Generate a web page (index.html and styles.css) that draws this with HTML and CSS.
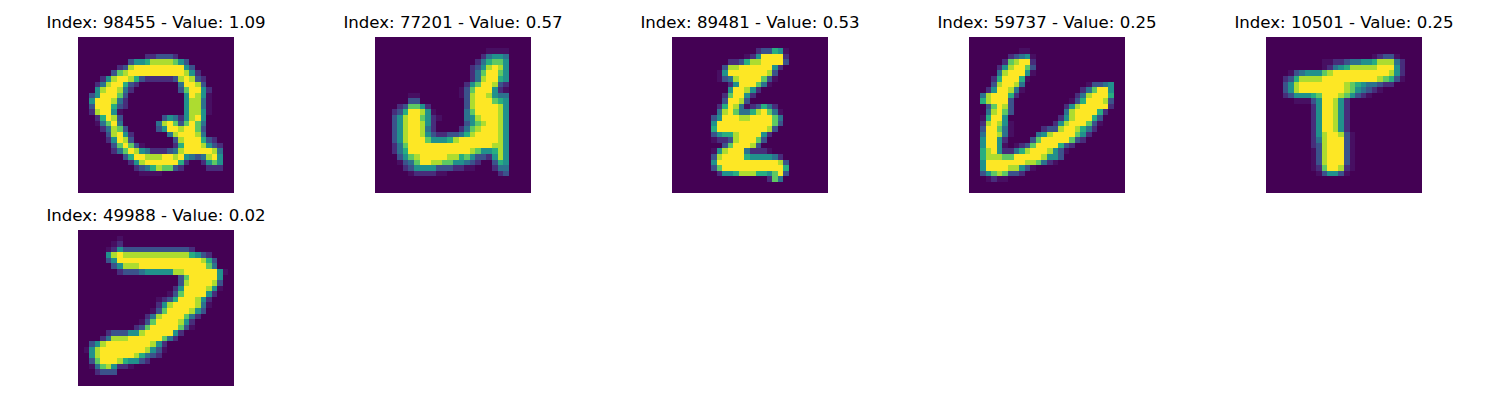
FILE: index.html
```html
<!DOCTYPE html>
<html lang="en">
<head>
<meta charset="utf-8">
<title>Top losses</title>
<link rel="stylesheet" href="styles.css">
</head>
<body>
<main class="figure">
  <figure class="panel"><figcaption class="panel-title">Index: 98455 - Value: 1.09</figcaption><canvas class="digit" data-glyph="q" width="28" height="28"></canvas></figure>
  <figure class="panel"><figcaption class="panel-title">Index: 77201 - Value: 0.57</figcaption><canvas class="digit" data-glyph="j" width="28" height="28"></canvas></figure>
  <figure class="panel"><figcaption class="panel-title">Index: 89481 - Value: 0.53</figcaption><canvas class="digit" data-glyph="e" width="28" height="28"></canvas></figure>
  <figure class="panel"><figcaption class="panel-title">Index: 59737 - Value: 0.25</figcaption><canvas class="digit" data-glyph="v" width="28" height="28"></canvas></figure>
  <figure class="panel"><figcaption class="panel-title">Index: 10501 - Value: 0.25</figcaption><canvas class="digit" data-glyph="t" width="28" height="28"></canvas></figure>
  <figure class="panel"><figcaption class="panel-title">Index: 49988 - Value: 0.02</figcaption><canvas class="digit" data-glyph="seven" width="28" height="28"></canvas></figure>
</main>
<script src="script.js"></script>
</body>
</html>
```
FILE: styles.css
```css
html, body {
  margin: 0;
  padding: 0;
  background: #ffffff;
}

.figure {
  display: grid;
  grid-template-columns: repeat(5, 156px);
  column-gap: 141px;
  row-gap: 13px;
  padding: 13px 0 0 78px;
}

.panel {
  margin: 0;
  display: flex;
  flex-direction: column;
  align-items: center;
  gap: 4px;
}

.panel-title {
  font-family: "DejaVu Sans", sans-serif;
  font-size: 16.6px;
  line-height: 20px;
  color: #000000;
  white-space: nowrap;
}

.digit {
  display: block;
  width: 156px;
  height: 156px;
  image-rendering: pixelated;
}
```
FILE: script.js
```js
var PALETTE = ["#440154", "#470f62", "#472d7b", "#3b528b", "#2c728e", "#21918c", "#28ae80", "#5ec962", "#addc30", "#fde725"];

var GLYPHS = {
  q: {3:"12:223332",4:"9:35568888753",5:"7:23899999999953",6:"6:3789999999999852",7:"4:2589986322222389832",8:"3:24899632 18:49983",9:"3:5899842 18:379952",10:"2:3599973 19:59851",11:"2:5999842 19:58841",12:"2:3999632 19:58841",13:"2:289951 19:58851",14:"3:26983 15:35425895",15:"3:14794 14:489737974",16:"4:24873 14:359989973",17:"5:38952 16:4899984",18:"5:25983 17:38999632",19:"6:379731 17:269998532",20:"6:24798542223489999984",21:"8:369988899895434895",22:"9:25899999962 22:2575",23:"10:234687732 23:222",24:"11:1111"},
  j: {2:"20:1111",3:"19:24554",4:"18:246775",5:"17:2358985",6:"17:2479975",7:"17:2489965",8:"16:25799832",9:"15:137999521",10:"6:11 15:138998544",11:"6:33 16:38999765",12:"4:237752 16:38999985",13:"3:23699851 16:47999985",14:"3:358997521 16:45899985",15:"3:35899852 16:35789985",16:"3:35899842 15:247899985",17:"3:358998532233468999985",18:"3:358999755568999999985",19:"3:247999999999999999885",20:"3:246999999999998755685",21:"4:35789999988675332585",22:"4:134799887755432 21:365",23:"5:2355553332211 21:244",24:"6:1222211 22:23"},
  e: {2:"15:233651",3:"13:12599992",4:"10:22368899993",5:"9:38899999952",6:"8:15999999983",7:"8:13489999731",8:"10:25999741",9:"10:599852",10:"9:279952",11:"9:39983",12:"8:26984123642",13:"8:489744689741",14:"7:3599988999974",15:"7:5999999999973",16:"7:699999999983",17:"7:35668999952",18:"7:1223899973",19:"9:3799983",20:"7:15899942221",21:"7:3899996555542",22:"7:59999999999983",23:"7:37999999999996",24:"8:2556888665793",25:"17:274"},
  v: {2:"9:11",3:"7:23451",4:"6:278992",5:"5:2589973",6:"5:4899951",7:"4:2699961",8:"4:389984 21:13345",9:"3:2599841 20:247995",10:"2:4899962 19:2489996",11:"2:689993 18:13699983",12:"3:37983 17:258999992",13:"3:48973 17:48999962",14:"2:16995 16:25899963",15:"2:289851 15:258999731",16:"2:399741 13:2338998642",17:"2:499841 12:4589999752",18:"2:59952 11:3799999732",19:"2:59951 8:12379999632",20:"2:6895224689998531",21:"2:688877999998553",22:"2:59999999887421",23:"2:5999988531",24:"2:35787332",25:"3:1211"},
  t: {3:"19:12331",4:"10:112234455688842",5:"10:124568888899952",6:"4:134555789999999999852",7:"3:2368888999999999987631",8:"3:35899999999876544322",9:"3:358999999998754321",10:"3:2355567999875321",11:"5:1113599852",12:"8:2599852",13:"8:2599852",14:"8:2599852",15:"8:2599852",16:"8:2599852",17:"8:25899831",18:"8:24899931",19:"8:23899931",20:"8:13899931",21:"8:13899931",22:"8:13899931",23:"8:12799821",24:"9:135531"},
  seven: {1:"7:1",2:"6:12",3:"5:1253333333333332",4:"5:5898888888888886532",5:"5:35999999999999999863",6:"6:3588899999999999974",7:"7:23334555558899999951",8:"18:37999995",9:"18:38999983",10:"17:259999851",11:"16:137999952",12:"14:1236999852",13:"14:2589999841",14:"13:1379999853",15:"12:2489999742",16:"11:1379999852",17:"10:23799999731",18:"5:23335589999952",19:"4:24888999999742",20:"2:35899999999852",21:"1:158999999998531",22:"2:5899999986432",23:"2:37999865532",24:"2:14785221",25:"3:2333"}
};

function paintSegment(ctx, row, segment) {
  var parts = segment.split(":");
  var col = parseInt(parts[0], 10);
  var digits = parts[1];
  for (var i = 0; i < digits.length; i++) {
    ctx.fillStyle = PALETTE[Number(digits[i])];
    ctx.fillRect(col + i, row, 1, 1);
  }
}

document.querySelectorAll(".digit").forEach(function (canvas) {
  var ctx = canvas.getContext("2d");
  var glyph = GLYPHS[canvas.dataset.glyph];
  ctx.fillStyle = PALETTE[0];
  ctx.fillRect(0, 0, 28, 28);
  Object.keys(glyph).forEach(function (row) {
    glyph[row].split(" ").forEach(function (segment) {
      paintSegment(ctx, Number(row), segment);
    });
  });
});
```
